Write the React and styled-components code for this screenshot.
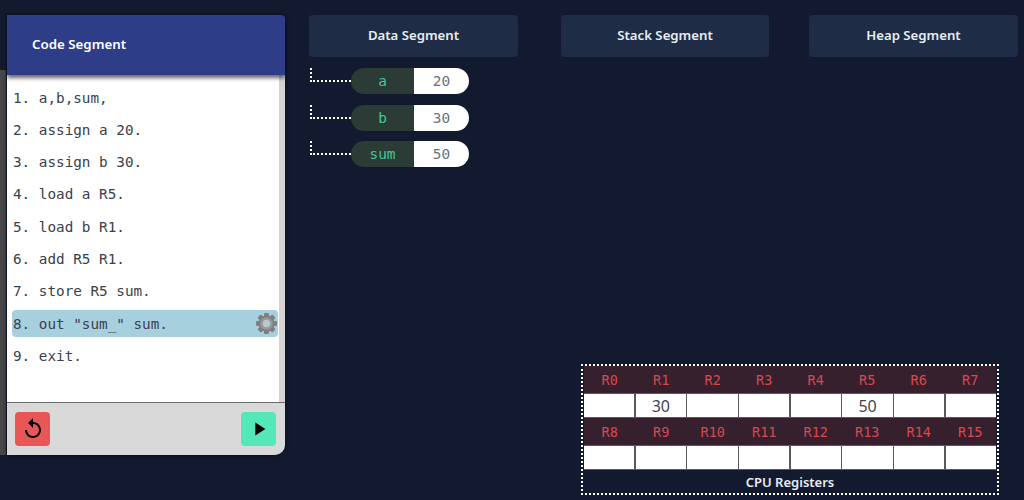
import React from 'react'
import styled, { createGlobalStyle } from 'styled-components'
import { MdReplay, MdPlayArrow } from 'react-icons/md'

const codeLines = [
  'a,b,sum,',
  'assign a 20.',
  'assign b 30.',
  'load a R5.',
  'load b R1.',
  'add R5 R1.',
  'store R5 sum.',
  'out "sum_" sum.',
  'exit.',
]

const variables = [
  { name: 'a', value: 20 },
  { name: 'b', value: 30 },
  { name: 'sum', value: 50 },
]

const registers = { R1: 30, R5: 50 }
const regRows = [
  [0, 1, 2, 3, 4, 5, 6, 7],
  [8, 9, 10, 11, 12, 13, 14, 15],
]

const GearIcon = () => (
  <svg viewBox="0 0 24 24">
    {[0, 45, 90, 135, 180, 225, 270, 315].map((deg) => (
      <rect key={deg} x="9.4" y="1" width="5.2" height="6" rx="1.2" fill="#7f7f82" transform={`rotate(${deg} 12 12)`} />
    ))}
    <circle cx="12" cy="12" r="8.4" fill="#7f7f82" />
    <circle cx="12" cy="12" r="6.6" fill="#97979a" />
    <circle cx="12" cy="12" r="4" fill="#b4c8d0" />
  </svg>
)

const App = () => {
  return (
    <Page>
      <GlobalStyle />
      <Sliver />
      <CodePanel>
        <CodeHeader>Code Segment</CodeHeader>
        <CodeBody>
          <CodeList>
            {codeLines.map((line, i) => (
              <CodeRow key={i} $active={i === 7}>
                <span>{i + 1}. {line}</span>
                {i === 7 && <GearIcon />}
              </CodeRow>
            ))}
          </CodeList>
          <Scrollbar />
        </CodeBody>
        <CodeFooter>
          <ActionButton $bg="#e95656"><MdReplay /></ActionButton>
          <ActionButton $bg="#54e8b8" $small><MdPlayArrow /></ActionButton>
        </CodeFooter>
      </CodePanel>

      <Workspace>
        <SegmentBar>
          <SegmentTitle>Data Segment</SegmentTitle>
          <SegmentTitle>Stack Segment</SegmentTitle>
          <SegmentTitle>Heap Segment</SegmentTitle>
        </SegmentBar>

        <VarList>
          {variables.map((v) => (
            <VarRow key={v.name}>
              <Connector />
              <VarPill>
                <VarName>{v.name}</VarName>
                <VarValue>{v.value}</VarValue>
              </VarPill>
            </VarRow>
          ))}
        </VarList>

        <RegisterBox>
          {regRows.map((row) => (
            <React.Fragment key={row[0]}>
              <RegLabels>
                {row.map((n) => <RegLabel key={n}>R{n}</RegLabel>)}
              </RegLabels>
              <RegCells>
                {row.map((n) => <RegCell key={n}>{registers['R' + n]}</RegCell>)}
              </RegCells>
            </React.Fragment>
          ))}
          <RegCaption>CPU Registers</RegCaption>
        </RegisterBox>
      </Workspace>
    </Page>
  )
}

export default App

const GlobalStyle = createGlobalStyle`
  html, body {
    margin: 0;
    padding: 0;
    background: #131a30;
  }
`

const Page = styled.div`
  width: 1024px;
  height: 500px;
  display: flex;
  overflow: hidden;
  background: #131a30;
  font-family: "Noto Sans", sans-serif;
`

const Sliver = styled.div`
  width: 6px;
  height: 385px;
  margin: 70px 1px 0 0;
  background: #47474a;
  flex: none;
`

const CodePanel = styled.section`
  width: 278px;
  height: 440px;
  margin-top: 15px;
  flex: none;
  display: flex;
  flex-direction: column;
  border-radius: 0 4px 10px 0;
  overflow: hidden;
  position: relative;
  box-shadow: 0 0 5px rgba(0, 0, 0, 0.65);
`

const CodeHeader = styled.h2`
  height: 60px;
  margin: 0;
  padding: 0 0 3px 25px;
  box-sizing: border-box;
  display: flex;
  align-items: center;
  flex: none;
  background: #2d3d88;
  box-shadow: 0 3px 4px rgba(0, 0, 0, 0.6);
  color: #fff;
  font-size: 13.3px;
  font-weight: 600;
  position: relative;
`

const CodeBody = styled.div`
  height: 328px;
  flex: none;
  display: flex;
  background: #fff;
  border-bottom: 1px solid #6b6b70;
  box-sizing: border-box;
`

const CodeList = styled.ol`
  flex: 1;
  margin: 0;
  padding: 9px 1px 0 5px;
  list-style: none;
`

const CodeRow = styled.li`
  height: 27px;
  margin-bottom: 5.3px;
  padding-left: 1px;
  display: flex;
  align-items: center;
  justify-content: space-between;
  border-radius: 4px;
  background: ${(p) => (p.$active ? '#a7d0df' : 'transparent')};
  color: #3a414c;
  font-family: "DejaVu Sans Mono", monospace;
  font-size: 14.3px;
  white-space: pre;

  svg {
    width: 23px;
    height: 23px;
  }
`

const Scrollbar = styled.div`
  width: 6px;
  flex: none;
  background: #d4d4d4;
`

const CodeFooter = styled.div`
  flex: 1;
  padding: 0 9px 0 8px;
  display: flex;
  align-items: center;
  justify-content: space-between;
  background: #d9d9d9;
`

const ActionButton = styled.button`
  width: 35px;
  height: 34px;
  padding: 0;
  display: flex;
  align-items: center;
  justify-content: center;
  border: none;
  border-radius: 4px;
  background: ${(p) => p.$bg};
  color: #000;

  svg {
    font-size: ${(p) => (p.$small ? '22px' : '24px')};
  }
`

const Workspace = styled.main`
  flex: 1;
  padding: 15px 6px 5px 24px;
  display: flex;
  flex-direction: column;
`

const SegmentBar = styled.div`
  display: flex;
`

const SegmentTitle = styled.div`
  width: 209px;
  height: 42px;
  padding-bottom: 2px;
  box-sizing: border-box;
  display: flex;
  align-items: center;
  justify-content: center;
  border-radius: 4px;
  background: #1e2d45;
  color: #e8edf4;
  font-size: 13.2px;
  font-weight: 600;

  &:nth-child(2) {
    width: 208px;
    margin: 0 40px 0 43px;
  }
`

const VarList = styled.div`
  margin-top: 11px;
  display: flex;
  flex-direction: column;
  gap: 10.5px;
`

const VarRow = styled.div`
  display: flex;
  align-items: flex-start;
`

const Connector = styled.div`
  width: 41px;
  height: 14px;
  margin-left: 1px;
  flex: none;
  box-sizing: border-box;
  border-left: 2px dotted #fff;
  border-bottom: 2px dotted #fff;
`

const VarPill = styled.div`
  width: 118px;
  height: 26px;
  display: flex;
  border-radius: 13px;
  overflow: hidden;
  font-family: "DejaVu Sans Mono", monospace;
  font-size: 14.4px;
`

const VarName = styled.div`
  width: 63px;
  display: flex;
  align-items: center;
  justify-content: center;
  background: #2a3c35;
  color: #42c79a;
`

const VarValue = styled.div`
  flex: 1;
  display: flex;
  align-items: center;
  justify-content: center;
  background: #fff;
  color: #6d717c;
`

const RegisterBox = styled.div`
  width: 418px;
  height: 131px;
  margin: auto 0 0 272px;
  padding: 0 1px;
  box-sizing: border-box;
  border: 2px dotted #fff;
`

const RegLabels = styled.div`
  height: 27px;
  display: grid;
  grid-template-columns: repeat(8, 1fr);
  background: #36202e;
`

const RegLabel = styled.div`
  display: flex;
  align-items: center;
  justify-content: center;
  color: #d8484f;
  font-family: "DejaVu Sans Mono", monospace;
  font-size: 13.5px;
`

const RegCells = styled.div`
  height: 25px;
  display: grid;
  grid-template-columns: repeat(8, 1fr);
  background: #5a5a5e;
  border-top: 1px solid #5a5a5e;
  border-bottom: 1px solid #5a5a5e;
  box-sizing: border-box;
  column-gap: 1.5px;
`

const RegCell = styled.div`
  display: flex;
  align-items: center;
  justify-content: center;
  background: #fff;
  color: #3b4656;
  font-size: 16px;
`

const RegCaption = styled.div`
  height: 22px;
  margin-top: 1px;
  display: flex;
  align-items: center;
  justify-content: center;
  color: #e8edf4;
  font-size: 13px;
  font-weight: 600;
`
